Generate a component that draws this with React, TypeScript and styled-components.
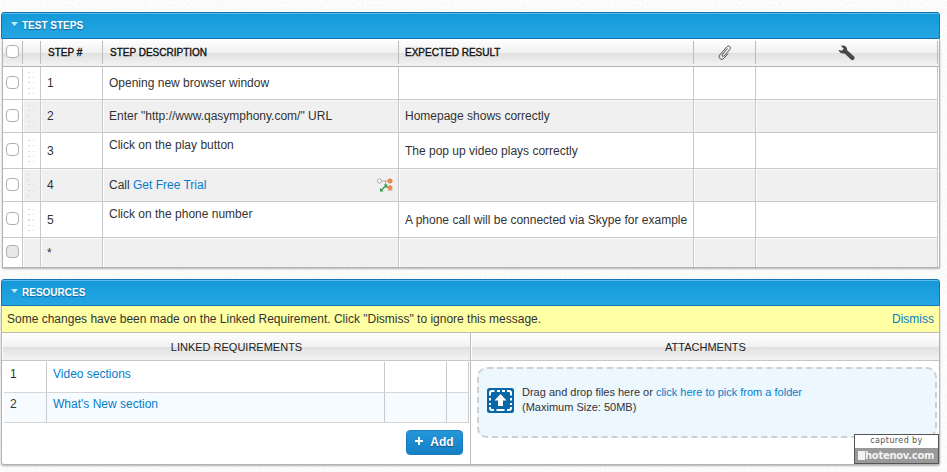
import React from "react";
import styled, { createGlobalStyle } from "styled-components";

const GlobalStyle = createGlobalStyle`
  * { box-sizing: border-box; }
  body {
    margin: 0;
    background: #f6f6f6;
    font-family: "Liberation Sans", Arial, sans-serif;
    font-size: 12px;
    color: #333;
  }
`;

const Page = styled.main`
  position: relative;
  width: 947px;
  height: 472px;
  padding: 12px 7px 0 1px;
  display: flex;
  flex-direction: column;
  gap: 11px;
  overflow: hidden;
`;

const Grain = styled.svg`
  position: absolute;
  inset: 0;
  width: 947px;
  height: 472px;
`;

const Panel = styled.section<{ $height: number }>`
  position: relative;
  height: ${(p) => p.$height}px;
  flex: none;
  display: flex;
  flex-direction: column;
  border-radius: 3px;
`;

const PanelHeader = styled.header`
  height: 27px;
  flex: none;
  display: flex;
  align-items: center;
  gap: 4px;
  padding: 0 9px;
  border: 1px solid #1573b5;
  border-radius: 3px 3px 0 0;
  background: linear-gradient(#1499d8, #25a6e3);
  box-shadow: inset 0 1px 0 #5dbbe8;
`;

const Caret = styled.i`
  width: 7px;
  height: 4px;
  flex: none;
  margin-top: -3px;
  background: #c3e8fa;
  clip-path: polygon(0 0, 100% 0, 50% 100%);
`;

const PanelTitle = styled.h2`
  margin: 0;
  color: #fff;
  font-size: 10px;
  line-height: 12px;
  font-weight: 700;
  text-shadow: 0 1px 1px rgba(0, 60, 110, 0.6);
`;

const PanelBody = styled.div<{ $inset?: boolean }>`
  flex: 1;
  display: flex;
  flex-direction: column;
  margin-left: ${(p) => (p.$inset ? 1 : 0)}px;
  border: 1px solid #b4b4b4;
  border-top: 0;
  border-radius: 0 0 ${(p) => (p.$inset ? "1px 1px" : "3px 3px")};
  background: #fff;
  box-shadow: 0 1px 2px rgba(0, 0, 0, 0.3);
`;

const glossy = "linear-gradient(#ffffff, #f1f1f1 50%, #e0e0e0 51%, #f3f3f3)";
const columns = "20px 18px 62px 296px 295px 62px 182px";

const StepsHead = styled.div`
  display: grid;
  grid-template-columns: ${columns};
  height: 28px;
  padding: 2px 0;
  border-bottom: 1px solid #b3b3b3;
  background: ${glossy};
`;

const HeadCell = styled.div<{ $center?: boolean; $indent?: number }>`
  display: flex;
  align-items: center;
  justify-content: ${(p) => (p.$center ? "center" : "flex-start")};
  padding-left: ${(p) => (p.$center ? 0 : p.$indent ?? 7)}px;
  border-right: 1px solid #bcbcbc;
  color: #111;
  font-size: 10px;
  -webkit-text-stroke: 0.35px #111;
`;

const StepRow = styled.div<{ $height: number; $shaded: boolean }>`
  display: grid;
  grid-template-columns: ${columns};
  height: ${(p) => p.$height}px;
  margin-right: 1px;
  background: ${(p) => (p.$shaded ? "#f0f0f0" : "#fff")};
  border-bottom: 1px solid #c9c9c9;

  &:last-child { border-bottom: 0; }
`;

const Cell = styled.div<{ $top?: boolean; $center?: boolean; $white?: boolean }>`
  display: flex;
  align-items: ${(p) => (p.$top ? "flex-start" : "center")};
  justify-content: ${(p) => (p.$center ? "center" : "space-between")};
  padding: ${(p) => (p.$center ? "0" : p.$top ? "5px 6px 0" : "0 5px 0 6px")};
  border-right: 1px solid #c9c9c9;
  box-shadow: inset 1px 1px 0 rgba(255, 255, 255, 0.8);
  background: ${(p) => (p.$white ? "#fff" : "transparent")};
  line-height: 14px;
  white-space: nowrap;
`;

const Link = styled.a`
  color: #057dca;
  text-decoration: none;
`;

const Checkbox = styled.span<{ $disabled?: boolean }>`
  width: 13px;
  height: 13px;
  margin-bottom: 2px;
  border: 1px solid #b0b0b0;
  border-radius: 4px;
  background: ${(p) => (p.$disabled ? "#e8e8e8" : "#fff")};
`;

const DragHandle = styled.span`
  width: 7px;
  height: 22px;
  margin-left: -1px;
  background:
    repeating-linear-gradient(#dfd9cb 0 1px, transparent 1px 5.25px) 0 0 / 2px 22px no-repeat,
    repeating-linear-gradient(#dfd9cb 0 1px, transparent 1px 5.25px) 5px 0 / 1px 22px no-repeat;
`;

const Notice = styled.div`
  height: 27px;
  display: flex;
  align-items: center;
  justify-content: space-between;
  padding: 0 5px;
  background: #ffffa3;
  border-bottom: 1px solid #b9b9b9;
`;

const Split = styled.div`
  flex: 1;
  display: grid;
  grid-template-columns: 469px 1fr;
`;

const Column = styled.div<{ $divided?: boolean }>`
  display: flex;
  flex-direction: column;
  border-right: ${(p) => (p.$divided ? "1px solid #bdbdbd" : "0")};
`;

const ColumnHead = styled.h3`
  height: 28px;
  margin: 0;
  padding: 1px 0 0 1px;
  display: flex;
  align-items: center;
  justify-content: center;
  font-size: 11px;
  font-weight: 400;
  color: #222;
  border-bottom: 1px solid #c6c6c6;
  box-shadow: inset 1px 0 0 #fff;
  background: ${glossy};
`;

const RequirementList = styled.div`
  padding: 1px 1px 0 2px;
`;

const Requirement = styled.div<{ $shaded: boolean }>`
  display: grid;
  grid-template-columns: 43px 338px 62px 22px;
  height: ${(p) => (p.$shaded ? 30 : 31)}px;
  background: ${(p) => (p.$shaded ? "#f6fbff" : "#fff")};
  border-bottom: 1px solid #d5d5d5;
`;

const RequirementCell = styled.div<{ $shaded: boolean }>`
  padding: ${(p) => (p.$shaded ? 4 : 5)}px 6px;
  border-right: 1px solid #c9c9c9;
  line-height: 14px;
`;

const AddButton = styled.button`
  width: 57px;
  height: 25px;
  margin: 7px 7px 0 auto;
  padding: 0 0 1px;
  display: flex;
  align-items: center;
  justify-content: center;
  gap: 7px;
  border: 1px solid #1a7cc0;
  border-radius: 4px;
  background: linear-gradient(#2596da, #157fc4);
  color: #fff;
  font: 700 12px "Liberation Sans", Arial, sans-serif;
  text-shadow: 0 1px 1px rgba(0, 40, 90, 0.6);
`;

const DropZone = styled.div`
  height: 71px;
  margin: 6px 2px 0 6px;
  padding: 0 8px 5px;
  display: flex;
  align-items: center;
  gap: 8px;
  border: 2px dashed #d0d0d0;
  border-radius: 10px;
  background: #ecf7fe;
  font-size: 11px;
  line-height: 15px;
`;

const Watermark = styled.aside`
  position: absolute;
  left: 854px;
  top: 434px;
  width: 85px;
  height: 30px;
  border: 1px solid #555;
  background: #fff;
  font-family: "DejaVu Sans", sans-serif;
  text-align: center;
`;

const Captured = styled.div`
  height: 13px;
  font-size: 8px;
  line-height: 12px;
  letter-spacing: 0.4px;
  color: #555;
`;

const Brand = styled.div`
  height: 15px;
  display: flex;
  align-items: center;
  padding-left: 3px;
  background: #999;
  color: #f4f4f4;
  font-size: 10px;
  font-weight: 700;
  letter-spacing: -0.28px;
`;

const BrandMark = styled.i`
  width: 7px;
  height: 9px;
  flex: none;
  background: #f2f2f2;
`;

const PaperclipIcon = () => (
  <svg width="16" height="18" viewBox="0 0 16 18" fill="none" strokeLinecap="round">
    <path
      d="M10.200 4.800 5.400 10.300c-1.200 1.500.7 2.700 1.900 1.400l5.600-6.300c1.800-2.200-.8-4.700-3.200-2.400l-6.800 7.800c-2.200 2.600 1 6.300 3.900 3.600l4.200-4.600"
      stroke="#4c4c4c"
      strokeWidth="1"
    />
  </svg>
);

const WrenchIcon = () => (
  <svg width="17" height="16" viewBox="0 0 17 16" fill="#484848">
    <path d="M3 .9C6.300-.4 9.400 1.700 9.200 5.200l6.900 6.400c1.600 1.700-1.100 4.700-2.900 3.200L6.600 8.400C3.700 9.100 1.100 7.600.5 4.800l3.200.9 2.100-2z" />
  </svg>
);

const CalledTestIcon = () => (
  <svg width="16" height="14" viewBox="0 0 16 14">
    <path d="M5 3h6M8.500 3v4M8.500 9.500H11" stroke="#aaa" fill="none" />
    <circle cx="2.500" cy="3" r="2" fill="#fff" stroke="#aaa" />
    <circle cx="13" cy="3" r="2.300" fill="#ef8a43" stroke="#d98a58" strokeWidth=".5" />
    <path d="M10.500 12.500H16" stroke="#ccc" />
    <circle cx="13" cy="9.800" r="2.300" fill="#ef8a43" stroke="#d98a58" strokeWidth=".5" />
    <path d="m4.500 12 4.500-4.500" stroke="#2d9442" strokeWidth="1.200" />
    <path d="M3 10v3.500h3.500zM6.800 6.500h3.500V10z" fill="#2d9442" />
  </svg>
);

const UploadIcon = () => (
  <svg width="27" height="25" viewBox="0 0 27 25">
    <rect width="27" height="25" rx="2.500" fill="#0867a8" />
    <path
      d="M3 7.500V5q0-2 2-2h2.500M10 3h3M15 3h3M20 3h2q2 0 2 2v2.500M24 10v2.500M24 15v2M24 19v1q0 2-2 2h-2M17.500 22h-8M7 22H5q-2 0-2-2v-1M3 17v-2M3 12.500V10"
      fill="none"
      stroke="#fff"
      strokeWidth="2"
    />
    <path d="m13.500 6 6 6.500H16V18h-5v-5.500H7.500z" fill="#fff" />
  </svg>
);

const PlusIcon = () => (
  <svg width="8" height="10" viewBox="0 0 8 10" stroke="#fff" strokeWidth="2">
    <path d="M4 0v8M0 4h8" />
  </svg>
);

type Step = { id: string; height: number; description?: React.ReactNode; result?: string; top?: boolean; called?: boolean };

const steps: Step[] = [
  { id: "1", height: 33, description: "Opening new browser window" },
  { id: "2", height: 33, description: 'Enter "http://www.qasymphony.com/" URL', result: "Homepage shows correctly" },
  { id: "3", height: 36, description: "Click on the play button", result: "The pop up video plays correctly", top: true },
  { id: "4", height: 33, description: <span>Call <Link>Get Free Trial</Link></span>, called: true },
  { id: "5", height: 36, description: "Click on the phone number", result: "A phone call will be connected via Skype for example", top: true },
  { id: "*", height: 29 },
];

const requirements = ["Video sections", "What's New section"];

export default function App() {
  return (
    <>
      <GlobalStyle />
      <Page>
        <Grain aria-hidden="true">
          <filter id="grain">
            <feTurbulence type="fractalNoise" baseFrequency="0.45" numOctaves="2" />
            <feColorMatrix values="0.12 0 0 0 0.905  0.12 0 0 0 0.905  0.12 0 0 0 0.905  0 0 0 0 1" />
          </filter>
          <rect width="947" height="472" filter="url(#grain)" />
        </Grain>
        <Panel $height={256}>
          <PanelHeader><Caret /><PanelTitle>TEST STEPS</PanelTitle></PanelHeader>
          <PanelBody $inset>
            <StepsHead>
              <HeadCell $center><Checkbox /></HeadCell>
              <HeadCell />
              <HeadCell>STEP #</HeadCell>
              <HeadCell>STEP DESCRIPTION</HeadCell>
              <HeadCell $indent={6}>EXPECTED RESULT</HeadCell>
              <HeadCell $center><PaperclipIcon /></HeadCell>
              <HeadCell $center><WrenchIcon /></HeadCell>
            </StepsHead>
            {steps.map((s, i) => (
              <StepRow key={s.id} $height={s.height} $shaded={i % 2 === 1}>
                <Cell $center $white><Checkbox $disabled={s.id === "*"} /></Cell>
                <Cell $center>{s.id !== "*" && <DragHandle />}</Cell>
                <Cell>{s.id}</Cell>
                <Cell $top={s.top}>{s.description}{s.called && <CalledTestIcon />}</Cell>
                <Cell>{s.result}</Cell>
                <Cell />
                <Cell />
              </StepRow>
            ))}
          </PanelBody>
        </Panel>

        <Panel $height={186}>
          <PanelHeader><Caret /><PanelTitle>RESOURCES</PanelTitle></PanelHeader>
          <PanelBody>
            <Notice>
              <span>Some changes have been made on the Linked Requirement. Click "Dismiss" to ignore this message.</span>
              <Link>Dismiss</Link>
            </Notice>
            <Split>
              <Column $divided>
                <ColumnHead>LINKED REQUIREMENTS</ColumnHead>
                <RequirementList>
                  {requirements.map((name, i) => {
                    const shaded = i % 2 === 1;
                    return (
                      <Requirement key={name} $shaded={shaded}>
                        <RequirementCell $shaded={shaded}>{i + 1}</RequirementCell>
                        <RequirementCell $shaded={shaded}><Link>{name}</Link></RequirementCell>
                        <RequirementCell $shaded={shaded} />
                        <RequirementCell $shaded={shaded} />
                      </Requirement>
                    );
                  })}
                </RequirementList>
                <AddButton><PlusIcon />Add</AddButton>
              </Column>
              <Column>
                <ColumnHead>ATTACHMENTS</ColumnHead>
                <DropZone>
                  <UploadIcon />
                  <div>
                    Drag and drop files here or <Link>click here to pick from a folder</Link>
                    <br />
                    (Maximum Size: 50MB)
                  </div>
                </DropZone>
              </Column>
            </Split>
          </PanelBody>
        </Panel>
      </Page>
      <Watermark>
        <Captured>captured by</Captured>
        <Brand><BrandMark />hotenov.com</Brand>
      </Watermark>
    </>
  );
}
